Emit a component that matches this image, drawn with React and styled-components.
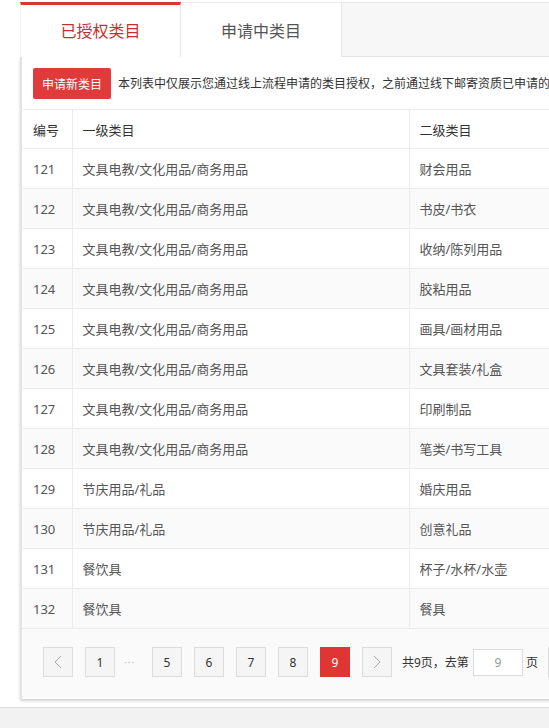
import React from 'react'
import styled, { createGlobalStyle } from 'styled-components'

const Global = createGlobalStyle`
    html, body {
        margin: 0;
        padding: 0;
        background: #fff;
        font-family: "Noto Sans", "Noto Sans CJK SC", sans-serif;
    }
`;

const Page = styled.div`
    width: 100vw;
    overflow: hidden;
`;

const Main = styled.div`
    padding: 2px 0 0 20px;
`;

const TabBar = styled.div`
    display: flex;
    height: 55px;
`;

const Tab = styled.div`
    width: 161px;
    box-sizing: border-box;
    background: #fff;
    border-right: 1px solid #e8e8e8;
    border-left: ${p => p.$first ? '1px solid #f0f0f0' : 'none'};
    border-top: ${p => p.$active ? '3px solid #d93636' : '1px solid #ececec'};
    display: flex;
    align-items: center;
    justify-content: center;
    padding-bottom: ${p => p.$active ? '3px' : '1px'};
    font-size: 16px;
    color: ${p => p.$active ? '#c62f2f' : '#555'};
`;

const TabRest = styled.div`
    flex: 1;
    background: #f7f7f7;
    border-top: 1px solid #e6e6e6;
    border-bottom: 1px solid #e6e6e6;
`;

const Panel = styled.div`
    width: 720px;
    background: #fff;
    border-left: 2px solid #e3e3e3;
    box-shadow: 0 2px 3px rgba(0, 0, 0, 0.18);
`;

const Toolbar = styled.div`
    display: flex;
    align-items: center;
    gap: 7px;
    height: 52px;
    padding-left: 11px;
    white-space: nowrap;
`;

const RedButton = styled.button`
    height: 31px;
    padding: 0 9px;
    border: none;
    border-radius: 2px;
    background: #e03a3a;
    color: #fff;
    font-family: inherit;
    font-size: 12px;
    margin-top: 1px;
`;

const Notice = styled.span`
    font-size: 12px;
    color: #333;
`;

const Table = styled.table`
    border-collapse: collapse;
    width: 700px;
    margin-left: 1px;
    table-layout: fixed;
    font-size: 13px;

    th, td {
        text-align: left;
        padding: 0 0 0 10px;
        border-top: 1px solid #ececec;
        border-right: 1px solid #ececec;
        white-space: nowrap;
    }

    th {
        height: 38px;
        color: #333;
        font-weight: normal;
    }

    td {
        height: 39px;
        color: #555;
    }

    tbody tr:nth-child(even) td {
        background: #fafafa;
    }
`;

const Pager = styled.div`
    display: flex;
    align-items: center;
    height: 71px;
    padding: 0 0 4px 21px;
    box-sizing: border-box;
    background: #fafafa;
    border-top: 1px solid #ececec;
    font-size: 12px;
    color: #333;
`;

const PageBtn = styled.div`
    width: 30px;
    height: 30px;
    box-sizing: border-box;
    margin-right: ${p => p.$gap ?? 12}px;
    display: flex;
    align-items: center;
    justify-content: center;
    border: 1px solid ${p => p.$active ? '#e03535' : '#dcdcdc'};
    background: ${p => p.$active ? '#e03535' : '#f5f5f5'};
    color: ${p => p.$active ? '#fff' : '#333'};
    font-size: 12px;
`;

const Dots = styled.span`
    width: 28px;
    margin-left: -3px;
    color: #bbb;
    letter-spacing: 1px;
    font-size: 10px;
`;

const PageInput = styled.div`
    width: 50px;
    height: 27px;
    box-sizing: border-box;
    margin: 0 3px 0 4px;
    border: 1px solid #dcdcdc;
    background: #fff;
    color: #999;
    display: flex;
    align-items: center;
    justify-content: center;
`;

const GoBtn = styled.div`
    width: 30px;
    height: 30px;
    margin-left: 10px;
    box-sizing: border-box;
    border: 1px solid #dcdcdc;
    background: #f5f5f5;
`;

const Footer = styled.div`
    margin-top: 8px;
    height: 21px;
    background: #f2f2f2;
    border-top: 1px solid #dedede;
`;

const rows = [
    ['121', '文具电教/文化用品/商务用品', '财会用品'],
    ['122', '文具电教/文化用品/商务用品', '书皮/书衣'],
    ['123', '文具电教/文化用品/商务用品', '收纳/陈列用品'],
    ['124', '文具电教/文化用品/商务用品', '胶粘用品'],
    ['125', '文具电教/文化用品/商务用品', '画具/画材用品'],
    ['126', '文具电教/文化用品/商务用品', '文具套装/礼盒'],
    ['127', '文具电教/文化用品/商务用品', '印刷制品'],
    ['128', '文具电教/文化用品/商务用品', '笔类/书写工具'],
    ['129', '节庆用品/礼品', '婚庆用品'],
    ['130', '节庆用品/礼品', '创意礼品'],
    ['131', '餐饮具', '杯子/水杯/水壶'],
    ['132', '餐饮具', '餐具'],
];

const Chevron = ({ dir }) => (
    <svg width="8" height="14" viewBox="0 0 8 14">
        <path d={dir === 'left' ? 'M7 1 L1 7 L7 13' : 'M1 1 L7 7 L1 13'} fill="none" stroke="#aaa" strokeWidth="1" />
    </svg>
);

const App = () => {
    return (
        <Page>
            <Global />
            <Main>
                <TabBar>
                    <Tab $active $first>已授权类目</Tab>
                    <Tab>申请中类目</Tab>
                    <TabRest />
                </TabBar>
                <Panel>
                    <Toolbar>
                        <RedButton>申请新类目</RedButton>
                        <Notice>本列表中仅展示您通过线上流程申请的类目授权，之前通过线下邮寄资质已申请的类目不在此列表中展示</Notice>
                    </Toolbar>
                    <Table>
                        <colgroup>
                            <col style={{ width: 49 }} />
                            <col style={{ width: 337 }} />
                            <col style={{ width: 200 }} />
                            <col />
                        </colgroup>
                        <thead>
                            <tr>
                                <th>编号</th>
                                <th>一级类目</th>
                                <th>二级类目</th>
                                <th>状态</th>
                            </tr>
                        </thead>
                        <tbody>
                            {rows.map((r) => (
                                <tr key={r[0]}>
                                    <td>{r[0]}</td>
                                    <td>{r[1]}</td>
                                    <td>{r[2]}</td>
                                    <td>已授权</td>
                                </tr>
                            ))}
                        </tbody>
                    </Table>
                    <Pager>
                        <PageBtn><Chevron dir="left" /></PageBtn>
                        <PageBtn>1</PageBtn>
                        <Dots>···</Dots>
                        {['5', '6', '7', '8'].map(n => <PageBtn key={n}>{n}</PageBtn>)}
                        <PageBtn $active>9</PageBtn>
                        <PageBtn $gap={10}><Chevron dir="right" /></PageBtn>
                        <span>共9页，去第</span>
                        <PageInput>9</PageInput>
                        <span>页</span>
                        <GoBtn />
                    </Pager>
                </Panel>
            </Main>
            <Footer />
        </Page>
    )
}

export default App
